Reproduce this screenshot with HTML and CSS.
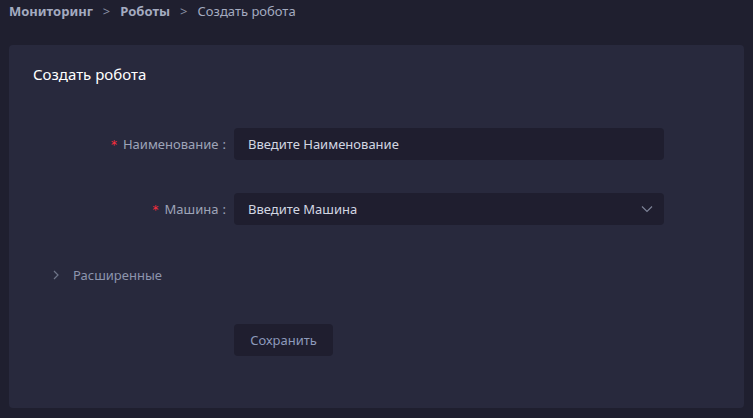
FILE: index.html
```html
<!DOCTYPE html>
<html lang="ru">
<head>
<meta charset="utf-8">
<link rel="stylesheet" href="styles.css">
</head>
<body>
<div class="page">
  <nav class="crumbs">
    <span class="crumb strong">Мониторинг</span>
    <span class="sep">&gt;</span>
    <span class="crumb strong">Роботы</span>
    <span class="sep">&gt;</span>
    <span class="crumb">Создать робота</span>
  </nav>
  <main class="card">
    <h1 class="title">Создать робота</h1>
    <form class="form">
      <div class="row">
        <label class="label"><span class="req">*</span>Наименование<span class="colon">:</span></label>
        <div class="control"><div class="input">Введите Наименование</div></div>
      </div>
      <div class="row">
        <label class="label"><span class="req">*</span>Машина<span class="colon">:</span></label>
        <div class="control"><div class="input select">Введите Машина
          <svg class="arrow" width="12" height="12" viewBox="0 0 12 12"><path d="M1 3.5 L6 8.5 L11 3.5" fill="none" stroke="#7c8296" stroke-width="1.2"/></svg>
        </div></div>
      </div>
      <div class="advanced">
        <svg class="chev" width="10" height="10" viewBox="0 0 10 10"><path d="M3 1 L7 5 L3 9" fill="none" stroke="#6e7488" stroke-width="1.2"/></svg>
        <span>Расширенные</span>
      </div>
      <div class="row actions">
        <div class="label"></div>
        <div class="control"><button type="button" class="btn">Сохранить</button></div>
      </div>
    </form>
  </main>
</div>
</body>
</html>
```

FILE: styles.css
```css
* { box-sizing: border-box; }
html, body { margin: 0; padding: 0; }
body {
  background: #1f1f2f;
  font-family: "Noto Sans", "Open Sans", sans-serif;
  font-size: 13px;
  width: 753px;
  height: 418px;
  overflow: hidden;
}
.page { padding: 0 9px 0 9px; }
.crumbs {
  height: 45px;
  display: flex;
  align-items: flex-start;
  padding-top: 1px;
  line-height: 20px;
  color: #a4abc0;
  font-size: 13px;
}
.crumbs .crumb.strong { font-weight: 700; }
.crumbs .sep { margin: 0 10px; color: #8a90a5; }
.card {
  background: #28293d;
  border-radius: 4px;
  height: 363px;
  padding: 18px 24px;
}
.title {
  margin: 0;
  font-size: 15px;
  font-weight: 400;
  color: #ffffff;
  line-height: 22px;
}
.form { margin-top: 43px; }
.row {
  display: flex;
  align-items: center;
  height: 32px;
  margin-bottom: 33px;
}
.label {
  width: 201px;
  padding-right: 8px;
  text-align: right;
  color: #9ea4b8;
}
.req { color: #ff2d3c; margin-right: 6px; font-family: "DejaVu Sans", sans-serif; font-size: 12px; }
.colon { margin-left: 4px; }
.control { width: 430px; }
.input {
  height: 32px;
  background: #1f1e2f;
  border-radius: 4px;
  padding: 0 14px;
  line-height: 32px;
  color: #d2d6e2;
  position: relative;
}
.arrow { position: absolute; right: 11px; top: 10px; }
.advanced {
  display: flex;
  align-items: center;
  gap: 12px;
  padding-left: 18px;
  height: 20px;
  margin-top: 40px;
  margin-bottom: 39px;
  color: #8d95ad;
}
.btn {
  height: 32px;
  width: 99px;
  background: #1f1e2f;
  border: none;
  border-radius: 4px;
  color: #8d9abb;
  font-family: inherit;
  font-size: 13px;
  padding: 0;
}
.actions { margin-bottom: 0; }
```
